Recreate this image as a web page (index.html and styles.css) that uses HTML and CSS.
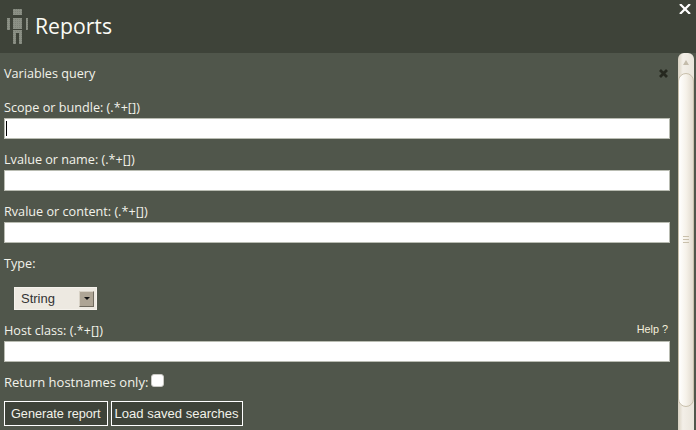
FILE: index.html
```html
<!DOCTYPE html>
<html lang="en">
<head>
    <meta charset="UTF-8">
    <title>Reports</title>
    <link rel="stylesheet" href="styles.css">
</head>
<body>
    <div class="titlebar">
        <svg class="robot" width="21" height="35" viewBox="0 0 21 35">
            <defs>
                <pattern id="dots" width="2" height="2" patternUnits="userSpaceOnUse">
                    <rect width="2" height="2" fill="#8b9085"/>
                    <rect width="1" height="1" fill="#7d8277"/>
                </pattern>
            </defs>
            <path fill="url(#dots)" d="M6 0h9v6H6zM6 9h9v11H6zM0 9h3v12H0zM19 9h2v12h-2zM6 21h9v14h-3V24H9v11H6z"/>
        </svg>
        <span class="title">Reports</span>
        <svg class="close-top" width="12" height="10" viewBox="0 0 12 10">
            <path fill="none" stroke="#fff" stroke-width="2.2" d="M1 0l10 10M11 0L1 10"/>
        </svg>
    </div>
    <div class="dialog">
        <div class="content">
            <div class="panel-head">
                <span>Variables query</span>
                <svg class="close-panel" width="9" height="9" viewBox="0 0 9 9">
                    <path fill="none" stroke="#26281f" stroke-width="2.8" d="M1 1l7 7M8 1L1 8"/>
                </svg>
            </div>
            <label class="field-label">Scope or bundle: (.*+[])</label>
            <div class="text-input focused"><i class="caret"></i></div>
            <label class="field-label">Lvalue or name: (.*+[])</label>
            <div class="text-input"></div>
            <label class="field-label">Rvalue or content: (.*+[])</label>
            <div class="text-input"></div>
            <label class="field-label">Type:</label>
            <div class="select">
                <span>String</span>
                <span class="select-btn"><i></i></span>
            </div>
            <div class="host-row">
                <label class="field-label">Host class: (.*+[])</label>
                <span class="help">Help ?</span>
            </div>
            <div class="text-input"></div>
            <div class="check-row">
                <span>Return hostnames only:</span>
                <input type="checkbox" class="check">
            </div>
            <div class="buttons">
                <button class="btn">Generate report</button>
                <button class="btn btn-tight">Load saved searches</button>
            </div>
        </div>
        <div class="scrollbar">
            <div class="arrow-up"></div>
            <div class="thumb">
                <div class="grip"></div>
            </div>
        </div>
    </div>
</body>
</html>
```

FILE: styles.css
```css
html, body {
    margin: 0;
    height: 100%;
    overflow: hidden;
}
body {
    width: 696px;
    height: 430px;
    font-family: "Open Sans", sans-serif;
    font-size: 12.65px;
    color: #f2f2ea;
    background: #50564b;
}
.titlebar {
    height: 53px;
    display: flex;
    align-items: center;
    gap: 7px;
    padding-left: 7px;
    background: #3e4339;
    position: relative;
}
.title {
    font-size: 21.2px;
    color: #fbfbf5;
    margin-top: -2px;
}
.close-top {
    position: absolute;
    top: 4px;
    right: 5px;
}
.dialog {
    display: flex;
    height: 377px;
}
.content {
    width: 666px;
    padding: 0 8px 0 4px;
}
.panel-head {
    display: flex;
    justify-content: space-between;
    align-items: center;
    height: 20px;
    margin-top: 10px;
}
.close-panel {
    margin-right: 2px;
}
.field-label {
    display: block;
    height: 17px;
    line-height: 17px;
    padding-bottom: 2px;
}
.panel-head + .field-label {
    margin-top: 16px;
}
.text-input {
    box-sizing: border-box;
    height: 21px;
    margin-bottom: 12px;
    background: #fff;
    border: 1px solid #b9bcb2;
}
.caret {
    display: block;
    width: 1px;
    height: 15px;
    margin: 2px 0 0 1px;
    background: #000;
}
.select {
    box-sizing: border-box;
    display: flex;
    align-items: center;
    justify-content: space-between;
    width: 83px;
    height: 23px;
    margin: 13px 0 12px 10px;
    padding: 0 2px 0 6px;
    background: #ede9e1;
    border: 1px solid #f5f2ec;
    font-family: "Liberation Sans", sans-serif;
    font-size: 13px;
    color: #333;
}
.select-btn {
    display: flex;
    align-items: center;
    justify-content: center;
    width: 15px;
    height: 16px;
    background: #aea595;
    border: 1px solid;
    border-color: #d8d2c6 #6f6a5e #6f6a5e #d8d2c6;
    box-sizing: border-box;
}
.select-btn i {
    border: 3px solid transparent;
    border-top: 3px solid #111;
    border-bottom: 0;
}
.host-row {
    display: flex;
    justify-content: space-between;
    align-items: flex-start;
}
.help {
    font-family: "Liberation Sans", sans-serif;
    font-size: 10.8px;
    line-height: 15px;
    color: #f5f0dc;
    margin-right: 2px;
}
.check-row {
    display: flex;
    align-items: flex-start;
    height: 27px;
    font-size: 13px;
    line-height: 17px;
    gap: 3px;
}
.check {
    appearance: none;
    box-sizing: border-box;
    margin: 0;
    width: 13px;
    height: 13px;
    background: #fff;
    border: 1px solid #c9c9c4;
    border-radius: 3px;
}
.buttons {
    display: flex;
    gap: 3px;
}
.btn {
    height: 25px;
    padding: 0 6px;
    background: #3e4339;
    border: 1px solid #fff;
    color: #f2f2ea;
    font-family: "Liberation Sans", sans-serif;
    font-size: 12.7px;
}
.btn-tight {
    padding: 0 3px;
    font-size: 13.05px;
}
.scrollbar {
    position: relative;
    width: 16px;
    height: 377px;
    background: linear-gradient(90deg, #d9d2c2, #f3efe8 30%, #e9e4da);
    border-radius: 6px 6px 0 0;
}
.arrow-up {
    width: 0;
    margin: 7px auto 0;
    border: 3px solid transparent;
    border-bottom: 5px solid #c4bcab;
    border-top: 0;
}
.thumb {
    position: absolute;
    top: 20px;
    left: 0;
    box-sizing: border-box;
    width: 16px;
    height: 334px;
    border: 1px solid #c9c0ac;
    border-radius: 8px;
    background: linear-gradient(90deg, #fff, #f6f2ea 50%, #e2dbcf);
}
.grip {
    width: 6px;
    height: 7px;
    margin: 162px auto 0;
    background: repeating-linear-gradient(180deg, #c9c0ac 0 1px, transparent 1px 3px);
}
```
